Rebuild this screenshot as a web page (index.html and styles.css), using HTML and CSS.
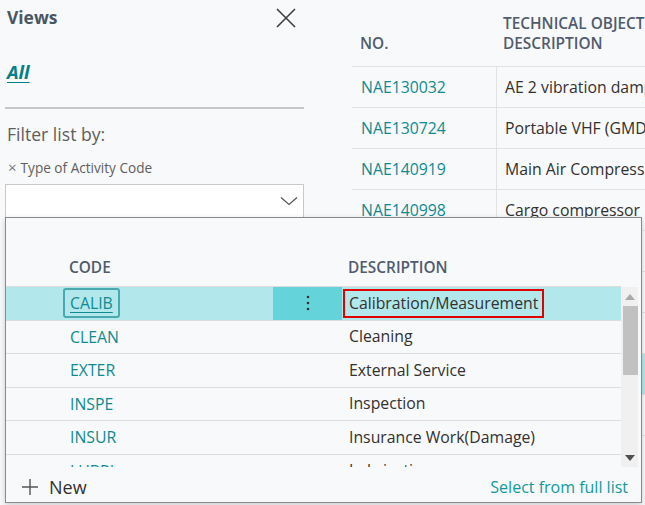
FILE: index.html
```html
<!DOCTYPE html>
<html>
<head>
<meta charset="utf-8">
<link rel="stylesheet" href="styles.css">
</head>
<body>
<div class="page">
  <aside class="views">
    <div class="views-head">
      <span class="views-title">Views</span>
      <svg class="close" width="20" height="20" viewBox="0 0 20 20"><path d="M1 1L19 19M19 1L1 19" stroke="#3f3f3f" stroke-width="1.6" fill="none"/></svg>
    </div>
    <a class="view-all">All</a>
    <div class="divider"></div>
    <div class="filter-label">Filter list by:</div>
    <div class="filter-chip"><span class="chip-x">×</span>Type of Activity Code</div>
    <div class="filter-input">
      <svg width="18" height="10" viewBox="0 0 18 10"><path d="M1 1.5L9 8.5L17 1.5" stroke="#555" stroke-width="1.2" fill="none"/></svg>
    </div>
  </aside>
  <main class="list">
    <div class="list-head">
      <div class="c-no">NO.</div>
      <div class="c-desc">TECHNICAL OBJECT<br>DESCRIPTION</div>
    </div>
    <div class="list-row"><div class="c-no link">NAE130032</div><div class="c-desc">AE 2 vibration damper</div></div>
    <div class="list-row"><div class="c-no link">NAE130724</div><div class="c-desc">Portable VHF (GMDSS)</div></div>
    <div class="list-row"><div class="c-no link">NAE140919</div><div class="c-desc">Main Air Compressor</div></div>
    <div class="list-row"><div class="c-no link">NAE140998</div><div class="c-desc">Cargo compressor</div></div>
    <div class="list-row"><div class="c-no link">NAE141002</div><div class="c-desc">Cargo compressor</div></div>
    <div class="list-row"><div class="c-no link">NAE141003</div><div class="c-desc">Cargo compressor</div></div>
    <div class="list-row"><div class="c-no link">NAE141004</div><div class="c-desc">Cargo compressor</div></div>
    <div class="list-row sel"><div class="c-no link">NAE141005</div><div class="c-desc">Cargo compressor</div></div>
    <div class="list-row"><div class="c-no link">NAE141006</div><div class="c-desc">Cargo compressor</div></div>
    <div class="list-row"><div class="c-no link">NAE141007</div><div class="c-desc">Cargo compressor</div></div>
  </main>
</div>

<div class="lookup">
  <div class="lk-head">
    <div class="lk-pad"></div>
    <div class="lk-code">CODE</div>
    <div class="lk-dots"></div>
    <div class="lk-desc">DESCRIPTION</div>
  </div>
  <div class="lk-body">
    <div class="lk-rows">
      <div class="lk-row current">
        <div class="lk-pad"></div>
        <div class="lk-code"><span class="code focus">CALIB</span></div>
        <div class="lk-dots"><svg width="4" height="16" viewBox="0 0 4 16"><circle cx="2" cy="2" r="1.3" fill="#333"/><circle cx="2" cy="8" r="1.3" fill="#333"/><circle cx="2" cy="14" r="1.3" fill="#333"/></svg></div>
        <div class="lk-desc"><span class="desc marked">Calibration/Measurement</span></div>
      </div>
      <div class="lk-row">
        <div class="lk-pad"></div>
        <div class="lk-code"><span class="code">CLEAN</span></div>
        <div class="lk-dots"></div>
        <div class="lk-desc"><span class="desc">Cleaning</span></div>
      </div>
      <div class="lk-row">
        <div class="lk-pad"></div>
        <div class="lk-code"><span class="code">EXTER</span></div>
        <div class="lk-dots"></div>
        <div class="lk-desc"><span class="desc">External Service</span></div>
      </div>
      <div class="lk-row">
        <div class="lk-pad"></div>
        <div class="lk-code"><span class="code">INSPE</span></div>
        <div class="lk-dots"></div>
        <div class="lk-desc"><span class="desc">Inspection</span></div>
      </div>
      <div class="lk-row">
        <div class="lk-pad"></div>
        <div class="lk-code"><span class="code">INSUR</span></div>
        <div class="lk-dots"></div>
        <div class="lk-desc"><span class="desc">Insurance Work(Damage)</span></div>
      </div>
      <div class="lk-row">
        <div class="lk-pad"></div>
        <div class="lk-code"><span class="code">LUBRI</span></div>
        <div class="lk-dots"></div>
        <div class="lk-desc"><span class="desc">Lubrication</span></div>
      </div>
    </div>
    <div class="scrollbar">
      <svg class="arrow" width="10" height="6" viewBox="0 0 10 6"><path d="M0 6L5 0L10 6Z" fill="#a9a9a9"/></svg>
      <div class="thumb"></div>
      <div class="track-fill"></div>
      <svg class="arrow" width="10" height="6" viewBox="0 0 10 6"><path d="M0 0L10 0L5 6Z" fill="#505050"/></svg>
    </div>
  </div>
  <div class="lk-foot">
    <span class="new">
      <svg width="16" height="16" viewBox="0 0 16 16"><path d="M8 0V16M0 8H16" stroke="#555" stroke-width="1.4"/></svg>
      New
    </span>
    <span class="full">Select from full list</span>
  </div>
</div>
</body>
</html>
```
FILE: styles.css
```css
* { box-sizing: border-box; }
html, body { margin: 0; padding: 0; }
body {
  width: 645px;
  height: 505px;
  overflow: hidden;
  background: #f8f9fa;
  font-family: "Open Sans", "Noto Sans", sans-serif;
  color: #323130;
  position: relative;
}
.page { display: flex; height: 505px; }

/* Views pane */
.views {
  flex: none;
  width: 352px;
  padding: 5px 48px 0 5px;
  display: flex;
  flex-direction: column;
}
.views-head {
  display: flex;
  justify-content: space-between;
  align-items: center;
  height: 24px;
  padding-left: 2px;
}
.views-title { font-weight: 700; font-size: 17.4px; color: #4a5563; }
.close { margin-right: 8px; margin-top: 1px; }
.view-all {
  margin-top: 30px;
  padding-left: 2px;
  font-size: 18.5px;
  line-height: 26px;
  font-weight: 700;
  font-style: italic;
  color: #00808a;
  text-decoration: underline;
  text-underline-offset: 3px;
}
.divider { margin-top: 22px; height: 2px; background: #c4c6c8; }
.filter-label {
  margin-top: 13px;
  padding-left: 2px;
  font-size: 17.6px;
  line-height: 24px;
  color: #605e5c;
}
.filter-chip {
  margin-top: 12px;
  padding-left: 3px;
  font-size: 13.6px;
  line-height: 19px;
  color: #605e5c;
}
.chip-x { font-size: 15px; margin-right: 4px; color: #777; }
.filter-input {
  margin-top: 7px;
  height: 34px;
  background: #fff;
  border: 1px solid #c8c8c8;
  display: flex;
  justify-content: flex-end;
  align-items: center;
  padding-right: 5px;
}

/* Background list */
.list { flex: 1; min-width: 0; overflow: hidden; }
.list-head {
  display: flex;
  height: 66px;
  align-items: flex-end;
  padding-bottom: 12px;
  font-size: 15.4px;
  line-height: 20px;
  font-weight: 600;
  color: #505c6d;
}
.list-head .c-no { flex: none; width: 144px; padding-left: 8px; }
.list-head .c-desc { padding-left: 7px; white-space: nowrap; }
.list-row {
  display: flex;
  height: 41px;
  border-top: 1px solid #e1e2e3;
  font-size: 15.8px;
  white-space: nowrap;
}
.list-row.sel { background: #b2e8eb; }
.list-row .c-no { flex: none; width: 144px; padding-left: 9px; display: flex; align-items: center; }
.list-row .c-desc { flex: 1; padding-left: 8px; border-left: 1px solid #e1e2e3; display: flex; align-items: center; }
.link { color: #0f8a91; }

/* Lookup dropdown */
.lookup {
  position: absolute;
  left: 5px;
  top: 217px;
  width: 637px;
  height: 286px;
  background: #f8f9fa;
  border: 1px solid #8a8a8a;
  box-shadow: 0 2px 6px rgba(0,0,0,0.18);
  display: flex;
  flex-direction: column;
}
.lk-head, .lk-row {
  display: grid;
  grid-template-columns: 57px 210px 69px 1fr;
}
.lk-head {
  height: 69px;
  align-items: end;
  padding-bottom: 8px;
  border-bottom: 1px solid #dcdcdc;
  margin-right: 20px;
  font-size: 15.4px;
  line-height: 20px;
  font-weight: 600;
  color: #505c6d;
}
.lk-head .lk-code { padding-left: 6px; }
.lk-head .lk-desc { padding-left: 6px; }
.lk-body {
  height: 180px;
  display: flex;
  padding-right: 3px;
}
.lk-rows { flex: 1; overflow: hidden; }
.lk-row {
  height: 33.5px;
  border-bottom: 1px solid #dcdcdc;
  align-items: center;
  font-size: 15.8px;
  white-space: nowrap;
}
.lk-row > div { height: 100%; display: flex; align-items: center; }
.lk-row.current { background: #b2e8eb; }
.lk-row.current .lk-dots { background: #64d3da; justify-content: center; }
.code {
  color: #0f8a91;
  border: 2px solid transparent;
  border-radius: 3px;
  padding: 2px 5px;
  line-height: 22px;
}
.code.focus { border-color: #4aa9ae; text-decoration: underline; text-underline-offset: 3px; }
.lk-desc .desc {
  margin-left: 1px;
  border: 2px solid transparent;
  padding: 0 4px;
  line-height: 25px;
  color: #323130;
}
.desc.marked { border-color: #e00000; }

.scrollbar {
  width: 17px;
  background: #f0f0f0;
  display: flex;
  flex-direction: column;
  align-items: center;
}
.arrow { flex: none; }
.scrollbar .arrow:first-child { margin-top: 7px; }
.scrollbar .arrow:last-child { margin-bottom: 6px; }
.thumb { width: 15px; margin-left: 2px; height: 69px; margin-top: 6px; background: #c1c1c1; flex: none; }
.track-fill { flex: 1; }

.lk-foot {
  flex: 1;
  display: flex;
  justify-content: space-between;
  align-items: center;
  padding: 4px 13px 0 16px;
  font-size: 16px;
}
.new { display: flex; align-items: center; gap: 11px; color: #323130; font-size: 18px; }
.full { color: #1199a0; }
```
